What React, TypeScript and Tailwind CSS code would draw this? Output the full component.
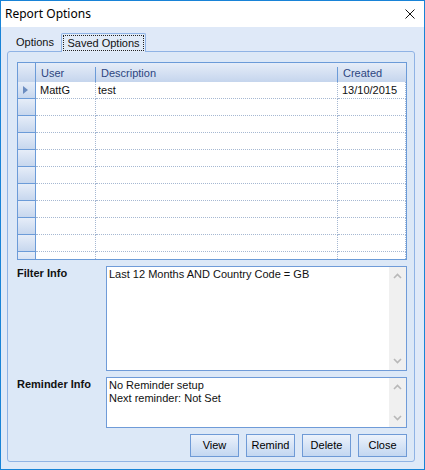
import React from 'react';

const rows = [
  { user: 'MattG', desc: 'test', created: '13/10/2015', current: true },
  ...Array.from({ length: 10 }, () => ({ user: '', desc: '', created: '', current: false })),
];

const Chevron: React.FC<{ up?: boolean }> = ({ up }) => (
  <svg width="9" height="6" viewBox="0 0 9 6" fill="none">
    <path d={up ? 'M1 5 L4.5 1.5 L8 5' : 'M1 1 L4.5 4.5 L8 1'} stroke="#b8b8b8" strokeWidth="1.6" />
  </svg>
);

const TextBox: React.FC<{ h: string; children: React.ReactNode }> = ({ h, children }) => (
  <div className={`w-[301px] ${h} border border-[#6f9bd8] bg-white flex`}>
    <div className="flex-1 pl-[2px] pt-[1px] leading-[13px] text-[#111]">{children}</div>
    <div className="w-[17px] bg-[#f0f0f0] flex flex-col items-center justify-between py-[6px]">
      <Chevron up />
      <Chevron />
    </div>
  </div>
);

const Button: React.FC<{ label: string }> = ({ label }) => (
  <button className="w-[49px] h-[23px] border border-[#6e9ad6] bg-gradient-to-b from-[#ecf2fb] to-[#c3d7f1] text-[11px] font-normal text-black">
    {label}
  </button>
);

const App: React.FC = () => {
  return (
    <div className="w-[425px] h-[470px] border border-[#1883d7] bg-[#dfe9f8] flex flex-col font-['Liberation_Sans',Arial,sans-serif] text-[11px] text-black">
      <div className="h-[26px] shrink-0 bg-white flex items-center justify-between pl-[4px] pr-[9px]">
        <span className="font-['Noto_Sans',sans-serif] text-[12px] text-black">Report Options</span>
        <svg width="10" height="10" viewBox="0 0 10 10">
          <path d="M0.5 0.5 L9.5 9.5 M9.5 0.5 L0.5 9.5" stroke="#111" strokeWidth="1" />
        </svg>
      </div>

      <div className="flex-1 pl-[6px] pt-[6px]">
        {/* tabs */}
        <div className="h-[18px] flex items-end pl-[2px]">
          <div className="w-[52px] h-[17px] flex items-center justify-center text-[#111]">Options</div>
          <div className="relative z-10 w-[85px] h-[19px] mb-[-1px] border border-b-0 border-[#8fb3e5] rounded-t-[2px] bg-[#e1ebf8] flex items-center justify-center text-[#111]">
            <div className="absolute left-[1px] right-[1px] top-[1px] bottom-[1px] border border-dotted border-[#222]" />
            Saved Options
          </div>
        </div>

        {/* panel */}
        <div className="w-[408px] h-[411px] border border-[#8fb3e5] rounded-[3px] bg-[#dce8f7] pl-[9px] pt-[10px]">
          {/* grid */}
          <div className="w-[390px] h-[198px] border border-[#6b9bd8] bg-white overflow-hidden flex flex-col">
            <div className="h-[19px] shrink-0 flex bg-gradient-to-b from-[#e6edf8] to-[#c5d5ed] text-[#2d4680]">
              <div className="w-[18px] border-r border-[#6b9bd8]" />
              <div className="w-[60px] flex items-center justify-between">
                <span className="pl-[5px] pt-[2px]">User</span>
                <div className="w-[1px] h-[15px] bg-[#6b9bd8] self-end" />
              </div>
              <div className="w-[242px] flex items-center justify-between">
                <span className="pl-[5px] pt-[2px]">Description</span>
                <div className="w-[1px] h-[15px] bg-[#6b9bd8] self-end" />
              </div>
              <div className="w-[68px] flex items-center">
                <span className="pl-[5px] pt-[2px]">Created</span>
              </div>
            </div>
            {rows.map((r, i) => (
              <div key={i} className="h-[17px] shrink-0 flex">
                <div className="w-[18px] border-r border-b border-[#6b9bd8] bg-gradient-to-b from-[#e6edf8] to-[#c7d7ee] flex items-center pl-[5px]">
                  {r.current && (
                    <svg width="5" height="8" viewBox="0 0 5 8">
                      <path d="M0 0 L5 4 L0 8 Z" fill="#6b8cc0" />
                    </svg>
                  )}
                </div>
                <div className="w-[60px] border-r border-b border-dotted border-[#a6b8d2] flex items-center pl-[4px] text-[#111]">{r.user}</div>
                <div className="w-[242px] border-r border-b border-dotted border-[#a6b8d2] flex items-center pl-[2px] text-[#111]">{r.desc}</div>
                <div className="w-[68px] border-r border-b border-dotted border-[#a6b8d2] flex items-center pl-[4px] text-[#111]">{r.created}</div>
              </div>
            ))}
          </div>

          {/* filter info */}
          <div className="flex mt-[6px]">
            <div className="w-[89px] font-bold leading-[13px] pt-[1px] text-[#111]">Filter Info</div>
            <TextBox h="h-[105px]">Last 12 Months AND Country Code = GB</TextBox>
          </div>

          {/* reminder info */}
          <div className="flex mt-[6px]">
            <div className="w-[89px] font-bold leading-[13px] pt-[1px] text-[#111]">Reminder Info</div>
            <TextBox h="h-[51px]">
              <div>No Reminder setup</div>
              <div>Next reminder: Not Set</div>
            </TextBox>
          </div>

          {/* buttons */}
          <div className="w-[390px] flex justify-end gap-[7px] mt-[6px]">
            <Button label="View" />
            <Button label="Remind" />
            <Button label="Delete" />
            <Button label="Close" />
          </div>
        </div>
      </div>
    </div>
  );
};

export default App;
